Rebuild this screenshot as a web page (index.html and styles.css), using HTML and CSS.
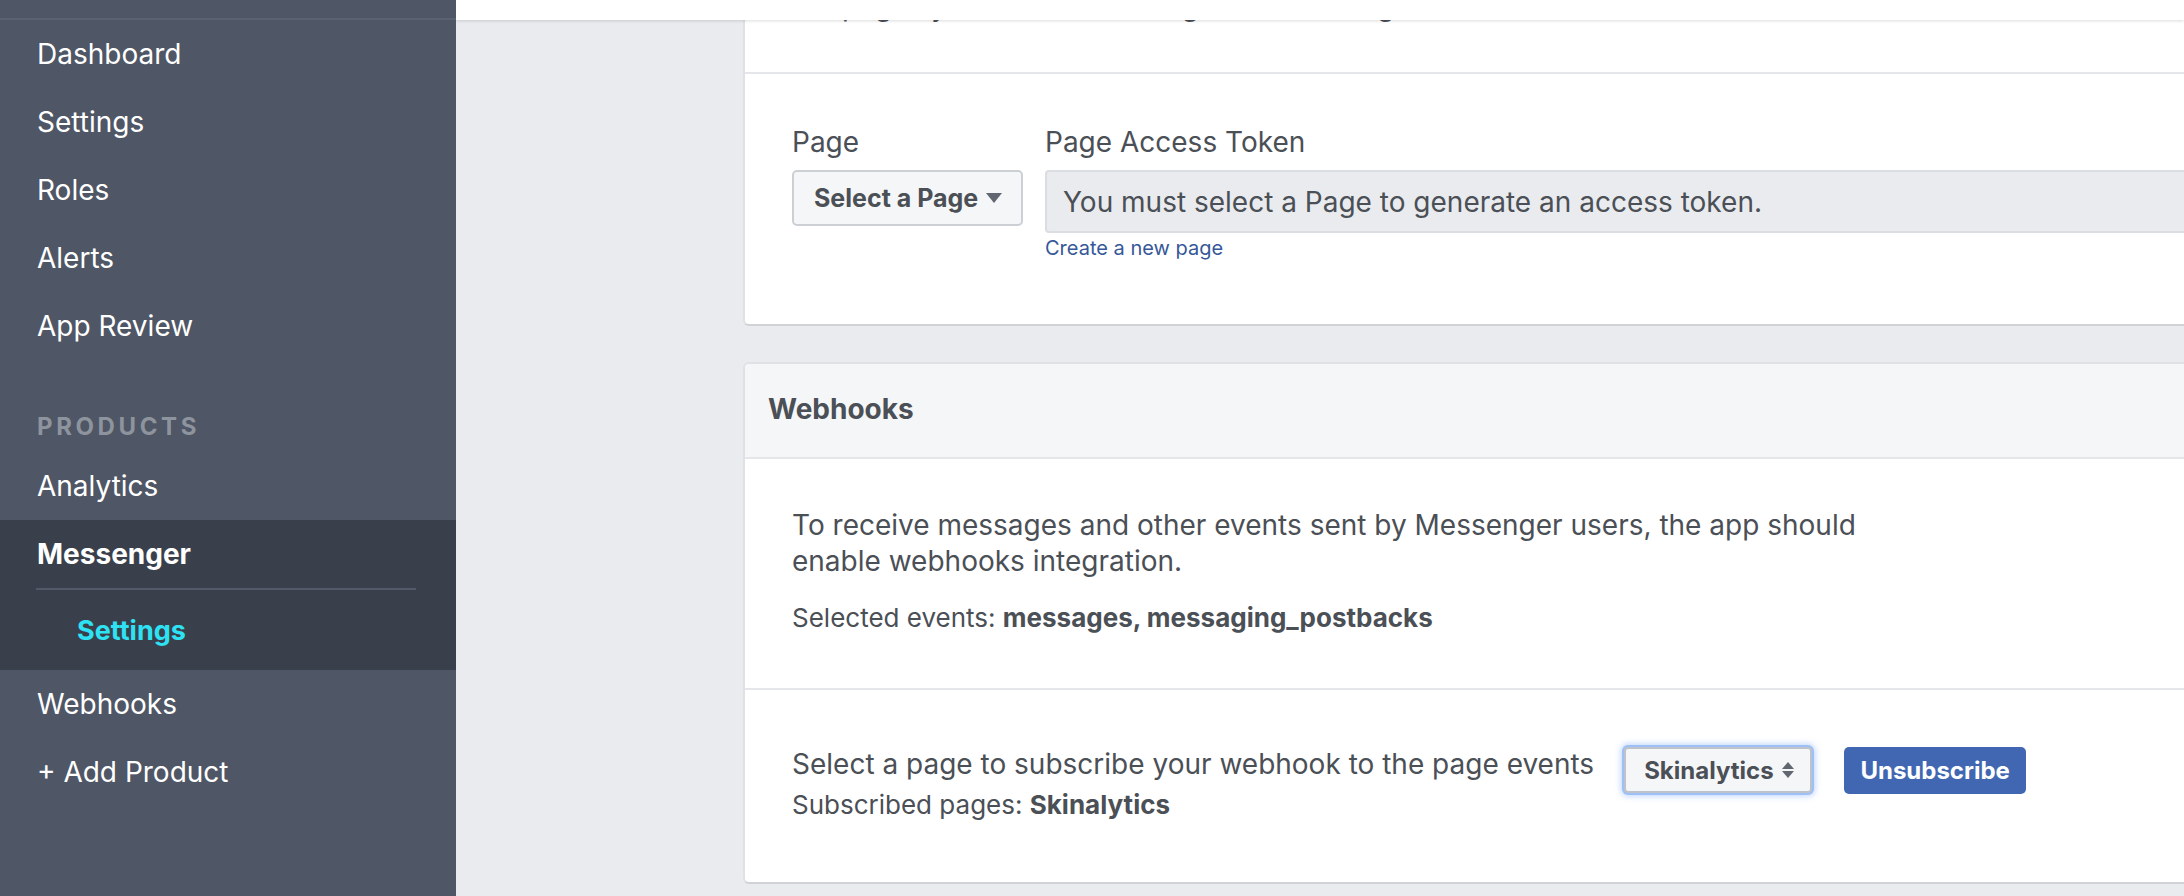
FILE: index.html
```html
<!DOCTYPE html>
<html lang="en">
<head>
<meta charset="utf-8">
<title>Messenger Settings</title>
<link rel="stylesheet" href="styles.css">
</head>
<body>
<div class="app">
  <aside class="sidebar">
    <div class="sidebar-top"></div>
    <ul class="nav">
      <li class="nav-item">Dashboard</li>
      <li class="nav-item">Settings</li>
      <li class="nav-item">Roles</li>
      <li class="nav-item">Alerts</li>
      <li class="nav-item">App Review</li>
    </ul>
    <div class="nav-heading">PRODUCTS</div>
    <ul class="nav">
      <li class="nav-item">Analytics</li>
      <li class="nav-group">
        <div class="nav-item nav-item--open">Messenger</div>
        <div class="nav-rule"></div>
        <div class="nav-sub">Settings</div>
      </li>
      <li class="nav-item">Webhooks</li>
      <li class="nav-item">+ Add Product</li>
    </ul>
  </aside>

  <main class="main">
    <div class="topbar"></div>
    <div class="content">
      <section class="card">
        <div class="section section--intro">
          <p class="text">the pages you don't own using Facebook Login.</p>
        </div>
        <div class="section section--form">
          <div class="field field--page">
            <div class="label">Page</div>
            <button class="btn-select" type="button">Select a Page
              <svg class="caret" width="16" height="10" viewBox="0 0 16 10"><path d="M0 0h16L8 10z" fill="#606770"/></svg>
            </button>
          </div>
          <div class="field field--token">
            <div class="label">Page Access Token</div>
            <div class="token-input">You must select a Page to generate an access token.</div>
            <a class="link" href="#">Create a new page</a>
          </div>
        </div>
      </section>

      <section class="card">
        <header class="card-header">Webhooks</header>
        <div class="section section--info">
          <p class="text text--wrap">To receive messages and other events sent by Messenger users, the app should enable webhooks integration.</p>
          <p class="text text--events">Selected events: <b>messages, messaging_postbacks</b></p>
        </div>
        <div class="section section--subscribe">
          <div class="subscribe-text">
            <p class="text">Select a page to subscribe your webhook to the page events</p>
            <p class="text text--small">Subscribed pages: <b>Skinalytics</b></p>
          </div>
          <div class="page-select">Skinalytics
            <svg class="updown" width="12" height="16" viewBox="0 0 12 16"><path d="M6 0l6 7H0z" fill="#606770"/><path d="M6 16L0 9h12z" fill="#606770"/></svg>
          </div>
          <button class="btn-primary" type="button">Unsubscribe</button>
        </div>
      </section>
    </div>
  </main>
</div>
</body>
</html>
```

FILE: styles.css
```css
html, body {
  margin: 0;
  padding: 0;
}
body {
  width: 2184px;
  height: 896px;
  overflow: hidden;
  font-family: "Inter", "Helvetica Neue", "Liberation Sans", sans-serif;
  color: #4b4f56;
}

.app {
  display: flex;
  height: 896px;
  overflow: hidden;
}

/* Sidebar */
.sidebar {
  width: 456px;
  flex: none;
  background: #4f5665;
  color: #fff;
}
.sidebar-top {
  height: 18px;
  border-bottom: 2px solid #5a6170;
}
.nav {
  list-style: none;
  margin: 0;
  padding: 0;
}
.nav-item {
  height: 68px;
  display: flex;
  align-items: center;
  padding-left: 37px;
  font-size: 28px;
  color: #fff;
}
.nav-heading {
  height: 92px;
  box-sizing: border-box;
  padding: 52px 0 0 37px;
  font-size: 24px;
  line-height: 30px;
  font-weight: 700;
  letter-spacing: 3.6px;
  color: #8d949e;
}
.nav-group {
  background: #3a3f4c;
}
.nav-item--open {
  font-weight: 700;
}
.nav-rule {
  height: 2px;
  margin: 0 40px 0 36px;
  background: #535968;
}
.nav-sub {
  height: 80px;
  display: flex;
  align-items: center;
  padding-left: 77px;
  font-size: 27px;
  font-weight: 700;
  color: #2de3f3;
}

/* Main */
.main {
  flex: 1;
  position: relative;
  overflow: hidden;
  background: #e9ebee;
}
.topbar {
  position: absolute;
  top: 0;
  left: 0;
  right: 0;
  height: 20px;
  background: #fff;
  box-shadow: 0 1px 3px rgba(0, 0, 0, 0.14);
  z-index: 2;
}
.content {
  display: flex;
  flex-direction: column;
  gap: 36px;
  padding-left: 287px;
  margin-top: -60px;
}

.card {
  width: 1500px;
  box-sizing: border-box;
  background: #fff;
  border: 2px solid #dfe1e5;
  border-bottom-color: #d0d2d6;
  border-radius: 6px;
  overflow: hidden;
}
.section + .section {
  border-top: 2px solid #e5e6e9;
}

.text {
  margin: 0;
  font-size: 28px;
  line-height: 36px;
}
.text b {
  font-weight: 700;
}

.section--intro {
  padding: 46px 47px 48px;
}

.section--form {
  display: flex;
  gap: 22px;
  padding: 52px 47px 64px;
}
.label {
  font-size: 28px;
  line-height: 32px;
  margin-bottom: 12px;
}
.field--page {
  flex: none;
  width: 231px;
}
.field--token {
  flex: 1;
  display: flex;
  flex-direction: column;
}
.btn-select {
  width: 231px;
  height: 56px;
  box-sizing: border-box;
  display: flex;
  align-items: center;
  padding: 0 0 0 20px;
  background: #f5f6f7;
  border: 2px solid #ccd0d5;
  border-radius: 5px;
  font-family: inherit;
  font-size: 25px;
  font-weight: 700;
  color: #4b4f56;
}
.caret {
  margin-left: 8px;
}
.token-input {
  height: 63px;
  box-sizing: border-box;
  display: flex;
  align-items: center;
  padding-left: 16px;
  background: #e9ebee;
  border: 2px solid #dadde1;
  border-radius: 4px;
  font-size: 28px;
  color: #4b4f56;
}
.link {
  margin-top: 3px;
  font-size: 20px;
  line-height: 24px;
  color: #365899;
  text-decoration: none;
}

.card-header {
  height: 95px;
  box-sizing: border-box;
  display: flex;
  align-items: center;
  padding: 0 0 4px 23px;
  background: #f5f6f7;
  border-bottom: 2px solid #e5e6e9;
  font-size: 28px;
  font-weight: 700;
  color: #4b4f56;
}
.card-header + .section {
  border-top: 0;
}

.section--info {
  padding: 48px 47px 52px;
}
.text--wrap {
  max-width: 1090px;
}
.text--events {
  margin-top: 21px;
  font-size: 26px;
}

.section--subscribe {
  display: flex;
  align-items: flex-start;
  padding: 57px 47px 62px;
}
.subscribe-text .text {
  line-height: 34px;
}
.subscribe-text .text--small {
  margin-top: 9px;
  font-size: 26px;
  line-height: 30px;
}
.page-select {
  margin-left: 30px;
  width: 188px;
  height: 46px;
  box-sizing: border-box;
  display: flex;
  align-items: center;
  padding-left: 18px;
  background: #f5f6f7;
  border: 2px solid #bec3c9;
  border-radius: 4px;
  box-shadow: 0 0 0 2px #9ec0f8, 0 0 6px 3px rgba(66, 133, 244, 0.35);
  font-size: 24px;
  font-weight: 700;
  color: #4b4f56;
}
.updown {
  margin-left: 8px;
}
.btn-primary {
  margin-left: 32px;
  width: 182px;
  height: 47px;
  background: #4267b2;
  border: 0;
  border-radius: 5px;
  font-family: inherit;
  font-size: 24px;
  font-weight: 700;
  color: #fff;
}
```
